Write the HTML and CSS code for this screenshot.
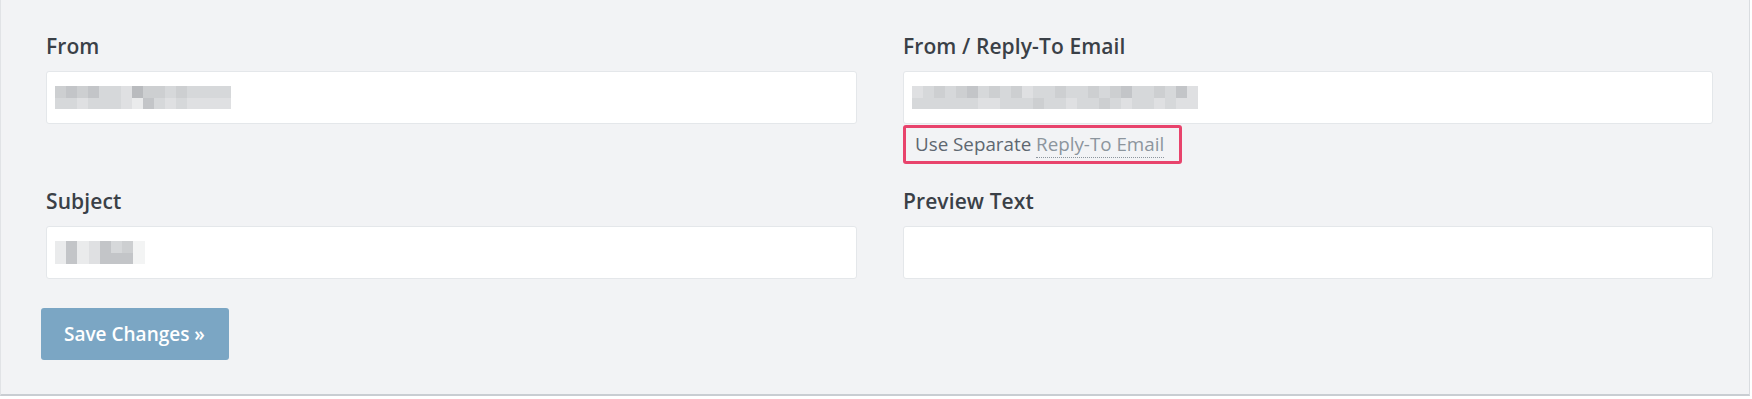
FILE: index.html
```html
<!DOCTYPE html>
<html>
<head>
<meta charset="utf-8">
<link rel="stylesheet" href="styles.css">
</head>
<body>
<div class="panel">
  <div class="grid">
    <div class="field">
      <label class="label">From</label>
      <div class="input">
        <div class="mosaic m-from">
          <i class="c3"></i><i class="c2"></i><i class="c3"></i><i class="c2"></i><i class="c4"></i><i class="c4"></i><i class="c5"></i><i class="c1"></i><i class="c3"></i><i class="c3"></i><i class="c4"></i><i class="c3"></i><i class="c4"></i><i class="c4"></i><i class="c4"></i><i class="c4"></i>
          <i class="c4"></i><i class="c4"></i><i class="c5"></i><i class="c4"></i><i class="c4"></i><i class="c4"></i><i class="c5"></i><i class="c6"></i><i class="c2"></i><i class="c4"></i><i class="c5"></i><i class="c4"></i><i class="c5"></i><i class="c5"></i><i class="c5"></i><i class="c5"></i>
        </div>
      </div>
    </div>
    <div class="field">
      <label class="label">From / Reply-To Email</label>
      <div class="input">
        <div class="mosaic m-email">
          <i class="c5"></i><i class="c4"></i><i class="c3"></i><i class="c4"></i><i class="c3"></i><i class="c2"></i><i class="c4"></i><i class="c3"></i><i class="c4"></i><i class="c3"></i><i class="c5"></i><i class="c4"></i><i class="c4"></i><i class="c3"></i><i class="c4"></i><i class="c4"></i><i class="c3"></i><i class="c4"></i><i class="c3"></i><i class="c2"></i><i class="c4"></i><i class="c4"></i><i class="c3"></i><i class="c4"></i><i class="c2"></i><i class="c5"></i>
          <i class="c4"></i><i class="c4"></i><i class="c4"></i><i class="c4"></i><i class="c4"></i><i class="c4"></i><i class="c5"></i><i class="c5"></i><i class="c4"></i><i class="c4"></i><i class="c4"></i><i class="c3"></i><i class="c4"></i><i class="c4"></i><i class="c5"></i><i class="c4"></i><i class="c4"></i><i class="c3"></i><i class="c4"></i><i class="c5"></i><i class="c4"></i><i class="c4"></i><i class="c5"></i><i class="c4"></i><i class="c5"></i><i class="c5"></i>
        </div>
      </div>
      <div class="separate">Use Separate <span class="link">Reply-To Email</span></div>
    </div>
    <div class="field">
      <label class="label">Subject</label>
      <div class="input">
        <div class="mosaic m-subject">
          <i class="c6"></i><i class="c2"></i><i class="c6"></i><i class="c5"></i><i class="c2"></i><i class="c4"></i><i class="c3"></i><i class="c7"></i>
          <i class="c6"></i><i class="c2"></i><i class="c6"></i><i class="c5"></i><i class="c2"></i><i class="c2"></i><i class="c2"></i><i class="c7"></i>
        </div>
      </div>
    </div>
    <div class="field">
      <label class="label">Preview Text</label>
      <div class="input"></div>
    </div>
  </div>
  <button class="btn">Save Changes »</button>
</div>
</body>
</html>
```

FILE: styles.css
```css
html, body {
  margin: 0;
  padding: 0;
  background: #ffffff;
}
body {
  font-family: "Open Sans", "Liberation Sans", sans-serif;
  height: 399px;
  overflow: hidden;
}
.panel {
  box-sizing: border-box;
  width: 1750px;
  height: 396px;
  background: #f2f3f5;
  border-left: 1px solid #e1e3e6;
  border-right: 1px solid #d9dce0;
  border-bottom: 2px solid #c9cdd2;
  padding: 34px 36px 0 45px;
}
.grid {
  display: grid;
  grid-template-columns: 811px 810px;
  column-gap: 46px;
  row-gap: 25px;
}
.field {
  display: flex;
  flex-direction: column;
}
.label {
  font-size: 21px;
  line-height: 24px;
  font-weight: 600;
  color: #3a4047;
  margin-bottom: 13px;
  letter-spacing: 0.1px;
}
.input {
  box-sizing: border-box;
  height: 53px;
  background: #ffffff;
  border: 1px solid #e4e7ea;
  border-radius: 3px;
  display: flex;
  align-items: center;
  padding-left: 8px;
}
.mosaic {
  display: grid;
  grid-auto-rows: 11.5px;
}
.mosaic i {
  display: block;
}
.m-from { grid-template-columns: repeat(16, 11px); }
.m-email { grid-template-columns: repeat(26, 11px); }
.m-subject { grid-template-columns: repeat(8, 11.2px); }
.c1 { background: #b9bbbe; }
.c2 { background: #c3c5c8; }
.c3 { background: #cdcfd1; }
.c4 { background: #d6d8da; }
.c5 { background: #dfe0e2; }
.c6 { background: #eaebec; }
.c7 { background: #f3f4f4; }
.separate {
  box-sizing: border-box;
  margin-top: 1px;
  width: 279px;
  height: 39px;
  border: 3px solid #e8436c;
  border-radius: 3px;
  padding-left: 9px;
  font-size: 18.8px;
  line-height: 32px;
  color: #5e6770;
  white-space: nowrap;
}
.link {
  color: #8c959d;
  border-bottom: 1px dotted #8c959d;
  line-height: 1;
}
.btn {
  display: block;
  box-sizing: border-box;
  margin-top: 29px;
  margin-left: -5px;
  width: 188px;
  height: 52px;
  background: #7ba6c4;
  border: none;
  border-radius: 3px;
  color: #ffffff;
  font-family: "Open Sans", "Liberation Sans", sans-serif;
  font-size: 19px;
  font-weight: 600;
  text-align: left;
  padding-left: 23px;
}
```
